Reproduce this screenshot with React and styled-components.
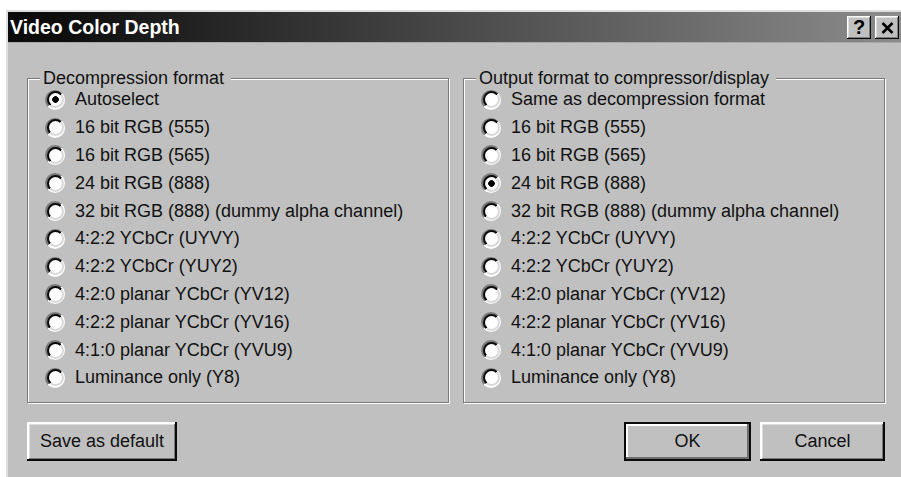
import React, { useState } from "react";
import styled, { createGlobalStyle } from "styled-components";

const GlobalStyle = createGlobalStyle`
  html, body {
    margin: 0;
    padding: 0;
    background: #ffffff;
    overflow: hidden;
  }
  body {
    font-family: "Liberation Sans", Arial, sans-serif;
  }
`;

const Page = styled.div`
  width: 901px;
  height: 477px;
  padding: 10px 0 0 6px;
  box-sizing: border-box;
`;

const Window = styled.div`
  width: 895px;
  height: 467px;
  box-sizing: border-box;
  background: #c0c0c0;
  border-top: 2px solid #dedede;
  border-left: 2px solid #dedede;
  display: flex;
  flex-direction: column;
`;

const TitleBar = styled.div`
  height: 30px;
  flex: none;
  display: flex;
  align-items: center;
  padding: 0 2px 0 2px;
  background: linear-gradient(to right, #0a0a0a 0%, #0e0e0e 6%, #8c8c8c 100%);
  border-bottom: 1px solid #a8a8a8;
`;

const Title = styled.div`
  flex: 1;
  color: #ffffff;
  font-weight: bold;
  font-size: 19.5px;
  white-space: nowrap;
`;

const CaptionButtons = styled.div`
  display: flex;
  gap: 4px;
  margin-top: 1px;
`;

const CaptionButton = styled.div`
  width: 24px;
  height: 23px;
  box-sizing: border-box;
  background: #c0c0c0;
  display: flex;
  align-items: center;
  justify-content: center;
  font-weight: bold;
  font-size: 20px;
  color: #000;
  box-shadow: inset -1px -1px #0a0a0a, inset 1px 1px #ffffff,
    inset -2px -2px #808080, inset 2px 2px #dfdfdf;
`;

const Body = styled.div`
  flex: 1;
  display: flex;
  flex-direction: column;
  padding: 27px 16px 0 19px;
`;

const Groups = styled.div`
  display: flex;
  gap: 14px;
`;

const Group = styled.fieldset`
  flex: 1;
  margin: 0;
  padding: 0 0 9px 0;
  min-width: 0;
  height: 333px;
  box-sizing: border-box;
  border: 1px solid #7a7a7a;
  box-shadow: inset 1px 1px #ffffff, 1px 1px #ffffff;
`;

const Legend = styled.legend`
  margin-left: 12px;
  padding: 0 7px 0 3px;
  font-size: 18px;
  line-height: 16px;
  color: #111;
  background: #c0c0c0;
  white-space: nowrap;
`;

const OptionList = styled.div`
  display: flex;
  flex-direction: column;
  padding: 0 0 0 17px;
`;

const Option = styled.label`
  display: flex;
  align-items: center;
  gap: 10px;
  height: 27.8px;
  font-size: 18px;
  color: #111;
  white-space: nowrap;
  cursor: default;
`;

/* Sunken 3D radio: grey/white outer ring, black/light inner ring, white well */
const RadioCircle = styled.span`
  position: relative;
  width: 20px;
  height: 20px;
  flex: none;
  border-radius: 50%;
  background: linear-gradient(135deg, #7a7a7a 50%, #ffffff 50%);

  &::before {
    content: "";
    position: absolute;
    inset: 1.5px;
    border-radius: 50%;
    background: linear-gradient(135deg, #0a0a0a 50%, #d8d8d8 50%);
  }

  &::after {
    content: "";
    position: absolute;
    inset: 3.5px;
    border-radius: 50%;
    background: ${(p) =>
      p.$checked
        ? "radial-gradient(circle, #000 0 3px, #ffffff 3.6px)"
        : "#ffffff"};
  }
`;

const ButtonRow = styled.div`
  display: flex;
  align-items: center;
  margin-top: 19px;
`;

const Spacer = styled.div`
  flex: 1;
`;

const Button = styled.button`
  width: ${(p) => p.$w}px;
  height: 39px;
  margin-left: ${(p) => p.$gap || 0}px;
  box-sizing: border-box;
  border: none;
  padding: 0;
  background: #c0c0c0;
  font-family: "Liberation Sans", Arial, sans-serif;
  font-size: 18px;
  color: #111;
  box-shadow: ${(p) =>
    p.$default
      ? "inset 0 0 0 2px #0a0a0a, inset -4px -4px #6e6e6e, inset 4px 4px #ffffff"
      : "inset -2px -2px #0a0a0a, inset 2px 2px #ffffff, inset -3px -3px #7a7a7a, inset 3px 3px #dfdfdf"};
`;

const decompression = [
  "Autoselect",
  "16 bit RGB (555)",
  "16 bit RGB (565)",
  "24 bit RGB (888)",
  "32 bit RGB (888) (dummy alpha channel)",
  "4:2:2 YCbCr (UYVY)",
  "4:2:2 YCbCr (YUY2)",
  "4:2:0 planar YCbCr (YV12)",
  "4:2:2 planar YCbCr (YV16)",
  "4:1:0 planar YCbCr (YVU9)",
  "Luminance only (Y8)",
];

const output = [
  "Same as decompression format",
  ...decompression.slice(1),
];

function RadioGroup({ title, items, value, onChange }) {
  return (
    <Group>
      <Legend>{title}</Legend>
      <OptionList>
        {items.map((label, i) => (
          <Option key={label} onClick={() => onChange(i)}>
            <RadioCircle $checked={value === i} />
            {label}
          </Option>
        ))}
      </OptionList>
    </Group>
  );
}

function CloseGlyph() {
  return (
    <svg width="13" height="12" viewBox="0 0 13 12">
      <path d="M1.5 1 L11.5 11 M11.5 1 L1.5 11" stroke="#000" strokeWidth="2.6" />
    </svg>
  );
}

export default function App() {
  const [input, setInput] = useState(0);
  const [out, setOut] = useState(3);

  return (
    <>
      <GlobalStyle />
      <Page>
        <Window>
          <TitleBar>
            <Title>Video Color Depth</Title>
            <CaptionButtons>
              <CaptionButton>?</CaptionButton>
              <CaptionButton>
                <CloseGlyph />
              </CaptionButton>
            </CaptionButtons>
          </TitleBar>
          <Body>
            <Groups>
              <RadioGroup
                title="Decompression format"
                items={decompression}
                value={input}
                onChange={setInput}
              />
              <RadioGroup
                title="Output format to compressor/display"
                items={output}
                value={out}
                onChange={setOut}
              />
            </Groups>
            <ButtonRow>
              <Button $w={150}>Save as default</Button>
              <Spacer />
              <Button $w={127} $default>
                OK
              </Button>
              <Button $w={125} $gap={9}>
                Cancel
              </Button>
            </ButtonRow>
          </Body>
        </Window>
      </Page>
    </>
  );
}
